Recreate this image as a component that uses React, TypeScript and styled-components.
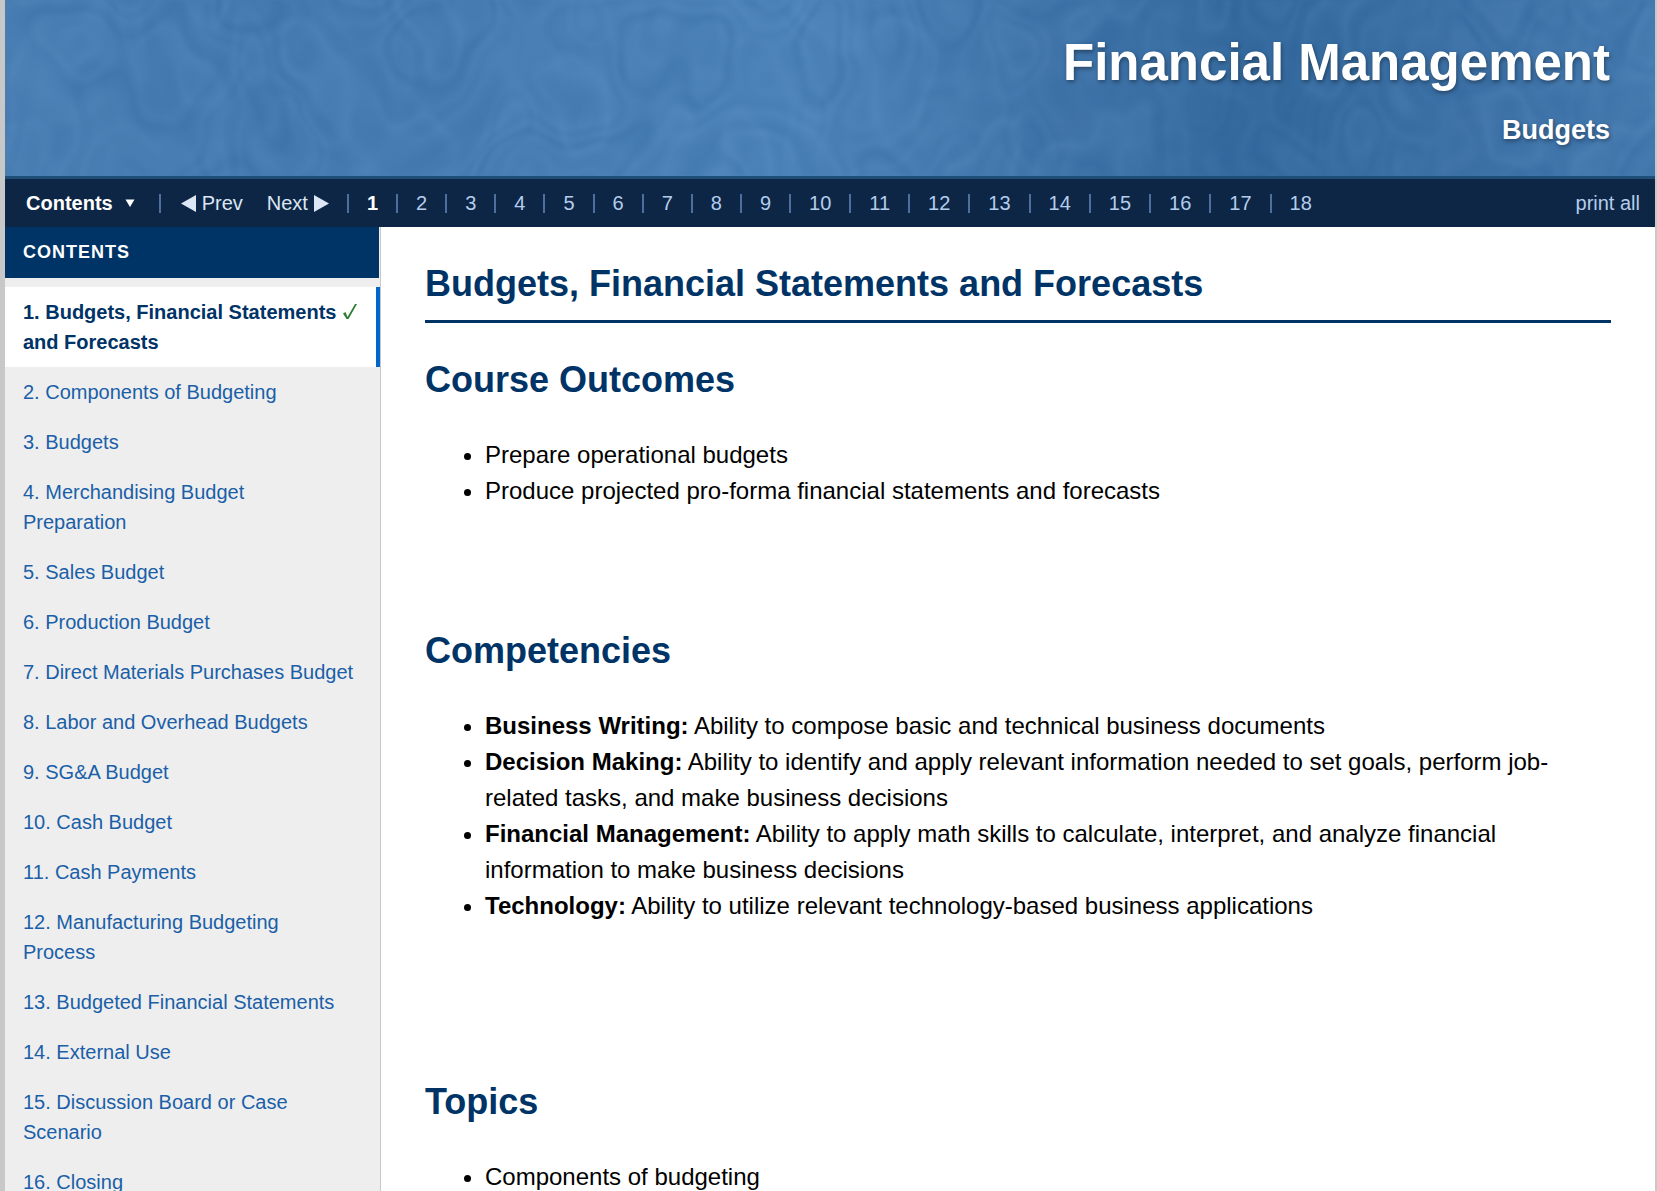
import React from "react";
import styled, { createGlobalStyle } from "styled-components";

const GlobalStyle = createGlobalStyle`
  * { box-sizing: border-box; }
  body {
    margin: 0;
    background: #c8c8c8;
    color: #000;
    font-family: "Liberation Sans", Arial, sans-serif;
    font-size: 24px;
    line-height: 36px;
  }
`;

const Page = styled.div`
  margin: 0 2px 0 5px;
  min-height: 100vh;
  background: #fff;
  display: flex;
  flex-direction: column;
`;

const Banner = styled.header`
  position: relative;
  overflow: hidden;
  padding: 33px 45px 28px;
  border-bottom: 3px solid #1f4e79;
  background: #467aaf;
  color: #fff;
  text-align: right;
  font-weight: bold;
  text-shadow: 1px 2px 4px rgba(0, 0, 0, 0.4);
`;

const Texture = styled.svg`
  position: absolute;
  inset: 0;
  width: 100%;
  height: 100%;
`;

const BannerText = styled.div`
  position: relative;
  display: flex;
  flex-direction: column;
  gap: 19px;
`;

const CourseName = styled.div`
  font-size: 51px;
  line-height: 60px;
`;

const UnitName = styled.div`
  font-size: 27px;
  line-height: 36px;
`;

const NavBar = styled.nav`
  display: flex;
  align-items: center;
  height: 48px;
  padding: 0 15px 0 21px;
  background: #0d2646;
  font-size: 20px;
  line-height: 24px;
  white-space: nowrap;
`;

const ContentsButton = styled.button`
  display: flex;
  align-items: center;
  gap: 12px;
  padding: 0;
  border: 0;
  background: none;
  color: #fff;
  font: inherit;
  font-weight: bold;
`;

const NavLink = styled.a<{ $current?: boolean }>`
  display: flex;
  align-items: center;
  gap: 6px;
  color: ${(p) => (p.$current ? "#fff" : "#b4cdec")};
  font-weight: ${(p) => (p.$current ? "bold" : "normal")};
  text-decoration: none;
`;

const StepLink = styled(NavLink)`
  color: #dce6f4;
`;

const Steps = styled.div`
  display: flex;
  gap: 24px;
  padding-left: 20px;
`;

const Divider = styled.span`
  flex: none;
  width: 2px;
  height: 19px;
  margin-left: 24px;
  background: #4d6f9d;
`;

const PageNumbers = styled.ol`
  display: flex;
  flex: 1;
  margin: 0;
  padding: 0;
  list-style: none;
`;

const PageNumber = styled.li`
  display: flex;
  align-items: center;
  &::before {
    content: "";
    width: 2px;
    height: 19px;
    margin: 0 18px;
    background: #4d6f9d;
  }
`;

const Columns = styled.div`
  display: flex;
  flex: 1;
`;

const Sidebar = styled.aside`
  flex: 0 0 376px;
  border-right: 1px solid #c8c8c8;
  background: #eee;
`;

const SidebarTitle = styled.h2`
  margin: 0 1px 9px 0;
  padding: 10px 18px 11px;
  background: #036;
  color: #fff;
  font-size: 18px;
  line-height: 30px;
  letter-spacing: 1px;
`;

const TocList = styled.ol`
  margin: 0;
  padding: 0;
  list-style: none;
`;

const TocLink = styled.a<{ $active?: boolean }>`
  display: flex;
  justify-content: space-between;
  padding: 10px 18px;
  border-right: 4px solid ${(p) => (p.$active ? "#0066cc" : "transparent")};
  background: ${(p) => (p.$active ? "#fff" : "transparent")};
  color: ${(p) => (p.$active ? "#036" : "#1a5fa8")};
  font-size: 20px;
  font-weight: ${(p) => (p.$active ? "bold" : "normal")};
  line-height: 30px;
  text-decoration: none;
  white-space: pre-line;
`;

const Check = styled.svg`
  flex: none;
  width: 16px;
  height: 18px;
  margin-top: 6px;
`;

const Main = styled.main`
  flex: 1;
  min-width: 0;
  padding: 32px 44px 0;
`;

const Title = styled.h1`
  margin: 0 0 34px;
  padding-bottom: 12px;
  border-bottom: 3px solid #036;
  color: #036;
  font-size: 36px;
  line-height: 49px;
`;

const Section = styled.section<{ $gap?: number }>`
  margin-bottom: ${(p) => p.$gap ?? 0}px;
`;

const SectionTitle = styled.h2`
  margin: 0 0 34px;
  color: #036;
  font-size: 36px;
  line-height: 46px;
`;

const Bullets = styled.ul`
  margin: 0;
  padding-left: 60px;
`;

const toc = [
  "Budgets, Financial Statements and Forecasts",
  "Components of Budgeting",
  "Budgets",
  "Merchandising Budget\nPreparation",
  "Sales Budget",
  "Production Budget",
  "Direct Materials Purchases Budget",
  "Labor and Overhead Budgets",
  "SG&A Budget",
  "Cash Budget",
  "Cash Payments",
  "Manufacturing Budgeting\nProcess",
  "Budgeted Financial Statements",
  "External Use",
  "Discussion Board or Case\nScenario",
  "Closing",
];

const competencies = [
  ["Business Writing:", "Ability to compose basic and technical business documents"],
  ["Decision Making:", "Ability to identify and apply relevant information needed to set goals, perform job-related tasks, and make business decisions"],
  ["Financial Management:", "Ability to apply math skills to calculate, interpret, and analyze financial information to make business decisions"],
  ["Technology:", "Ability to utilize relevant technology-based business applications"],
];

function BannerTexture() {
  return (
    <Texture aria-hidden="true" preserveAspectRatio="none">
      <defs>
        <linearGradient id="tone">
          <stop offset="0" stopColor="#4a7fb4" />
          <stop offset="0.18" stopColor="#457bb0" />
          <stop offset="0.48" stopColor="#4e85ba" />
          <stop offset="0.62" stopColor="#4377ac" />
          <stop offset="0.76" stopColor="#34699d" />
          <stop offset="0.88" stopColor="#3d71a6" />
          <stop offset="1" stopColor="#467bb0" />
        </linearGradient>
        <filter id="contours" x="0" y="0" width="100%" height="100%" colorInterpolationFilters="sRGB">
          <feTurbulence type="fractalNoise" baseFrequency="0.01 0.008" numOctaves="2" seed="8" />
          <feColorMatrix values="0 0 0 0 0.14  0 0 0 0 0.36  0 0 0 0 0.58  1 0 0 0 0" />
          <feComponentTransfer>
            <feFuncA type="table" tableValues="0 0 0 .5 .1 .4 .2 .9 .1 .5 0 .4 .8 .1 .5 .2 .6 0 0 0" />
          </feComponentTransfer>
          <feGaussianBlur stdDeviation="1" />
        </filter>
        <filter id="lights" x="0" y="0" width="100%" height="100%" colorInterpolationFilters="sRGB">
          <feTurbulence type="fractalNoise" baseFrequency="0.013 0.009" numOctaves="2" seed="31" />
          <feColorMatrix values="0 0 0 0 0.45  0 0 0 0 0.65  0 0 0 0 0.85  1 0 0 0 0" />
          <feComponentTransfer>
            <feFuncA type="table" tableValues="0 0 0 0 .4 0 .3 .8 .1 0 .5 .1 .7 .2 0 .4 0 0" />
          </feComponentTransfer>
          <feGaussianBlur stdDeviation="1" />
        </filter>
      </defs>
      <rect width="100%" height="100%" fill="url(#tone)" />
      <rect width="100%" height="100%" filter="url(#contours)" opacity="0.26" />
      <rect width="100%" height="100%" filter="url(#lights)" opacity="0.16" />
    </Texture>
  );
}

export default function App() {
  return (
    <>
      <GlobalStyle />
      <Page>
        <Banner>
          <BannerTexture />
          <BannerText>
            <CourseName>Financial Management</CourseName>
            <UnitName>Budgets</UnitName>
          </BannerText>
        </Banner>
        <NavBar>
          <ContentsButton type="button">
            Contents
            <svg width="10" height="8" viewBox="0 0 10 8" aria-hidden="true">
              <path d="M0.500 0.500h9L5 8z" fill="#fff" />
            </svg>
          </ContentsButton>
          <Divider />
          <Steps>
            <StepLink href="#prev">
              <svg width="15" height="17" viewBox="0 0 15 17" aria-hidden="true">
                <path d="M15 0v17L0 8.5z" fill="#dce6f4" />
              </svg>
              Prev
            </StepLink>
            <StepLink href="#next">
              Next
              <svg width="15" height="17" viewBox="0 0 15 17" aria-hidden="true">
                <path d="M0 0v17l15-8.5z" fill="#dce6f4" />
              </svg>
            </StepLink>
          </Steps>
          <PageNumbers>
            {Array.from({ length: 18 }, (_, i) => (
              <PageNumber key={i}>
                <NavLink href={`#page-${i + 1}`} $current={i === 0}>{i + 1}</NavLink>
              </PageNumber>
            ))}
          </PageNumbers>
          <NavLink href="#print">print all</NavLink>
        </NavBar>
        <Columns>
          <Sidebar>
            <SidebarTitle>CONTENTS</SidebarTitle>
            <TocList>
              {toc.map((name, i) => (
                <li key={name}>
                  <TocLink href={`#page-${i + 1}`} $active={i === 0}>
                    <span>{`${i + 1}. ${name}`}</span>
                    {i === 0 && (
                      <Check viewBox="0 0 16 18" aria-label="Completed">
                        <path d="M1 10.5l2.5-1.5 2 5L13 1h2L6.500 16H4.500z" fill="#2e7d32" />
                      </Check>
                    )}
                  </TocLink>
                </li>
              ))}
            </TocList>
          </Sidebar>
          <Main>
            <Title>Budgets, Financial Statements and Forecasts</Title>
            <Section $gap={119}>
              <SectionTitle>Course Outcomes</SectionTitle>
              <Bullets>
                <li>Prepare operational budgets</li>
                <li>Produce projected pro-forma financial statements and forecasts</li>
              </Bullets>
            </Section>
            <Section $gap={155}>
              <SectionTitle>Competencies</SectionTitle>
              <Bullets>
                {competencies.map(([term, text]) => (
                  <li key={term}><strong>{term}</strong>{` ${text}`}</li>
                ))}
              </Bullets>
            </Section>
            <Section>
              <SectionTitle>Topics</SectionTitle>
              <Bullets>
                <li>Components of budgeting</li>
              </Bullets>
            </Section>
          </Main>
        </Columns>
      </Page>
    </>
  );
}
